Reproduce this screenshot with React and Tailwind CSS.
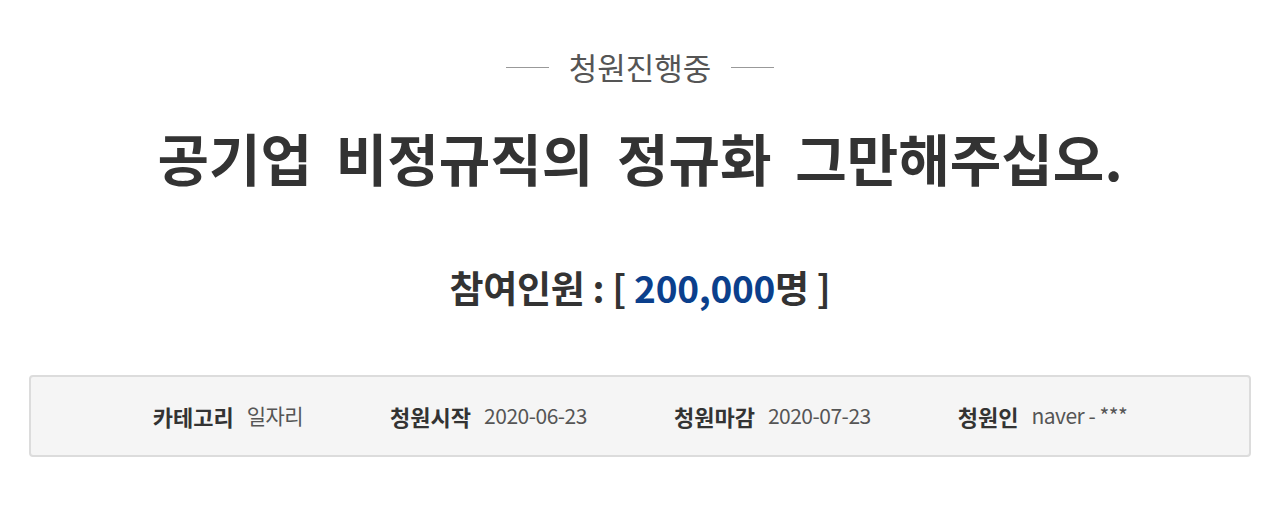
const FONT = { fontFamily: '"Noto Sans CJK KR", "Noto Sans", sans-serif' }

const INFO = [
  { label: '카테고리', value: '일자리' },
  { label: '청원시작', value: '2020-06-23' },
  { label: '청원마감', value: '2020-07-23' },
  { label: '청원인', value: 'naver - ***' },
]

export default function App() {
  return (
    <div className="w-[1280px] h-[509px] bg-white" style={FONT}>
      {/* Status */}
      <div className="pt-[46px] flex items-center justify-center">
        <span className="w-[43px] h-px bg-[#999]" />
        <span className="mx-[20px] text-[31px] leading-[42px] text-[#555]">청원진행중</span>
        <span className="w-[43px] h-px bg-[#999]" />
      </div>

      {/* Title */}
      <h1 className="mt-[36px] text-center text-[56px] leading-[66px] font-bold text-[#333] [word-spacing:11px]">
        공기업 비정규직의 정규화 그만해주십오.
      </h1>

      {/* Count */}
      <div className="mt-[73px] text-center text-[37px] leading-[48px] font-bold text-[#333] tracking-[-0.3px]">
        참여인원 : [ <span className="text-[#0b3f8c]">200,000</span>명 ]
      </div>

      {/* Info box */}
      <div className="mx-[29px] mt-[64px] h-[82px] bg-[#f5f5f5] border-2 border-[#dcdcdc] rounded-[4px] flex items-center justify-center gap-[87px]">
        {INFO.map(i => (
          <div key={i.label} className="flex items-center gap-[13px]">
            <span className="text-[22px] font-bold text-[#333]">{i.label}</span>
            <span className="text-[21px] text-[#555] tracking-[-0.5px]">{i.value}</span>
          </div>
        ))}
      </div>
    </div>
  )
}
